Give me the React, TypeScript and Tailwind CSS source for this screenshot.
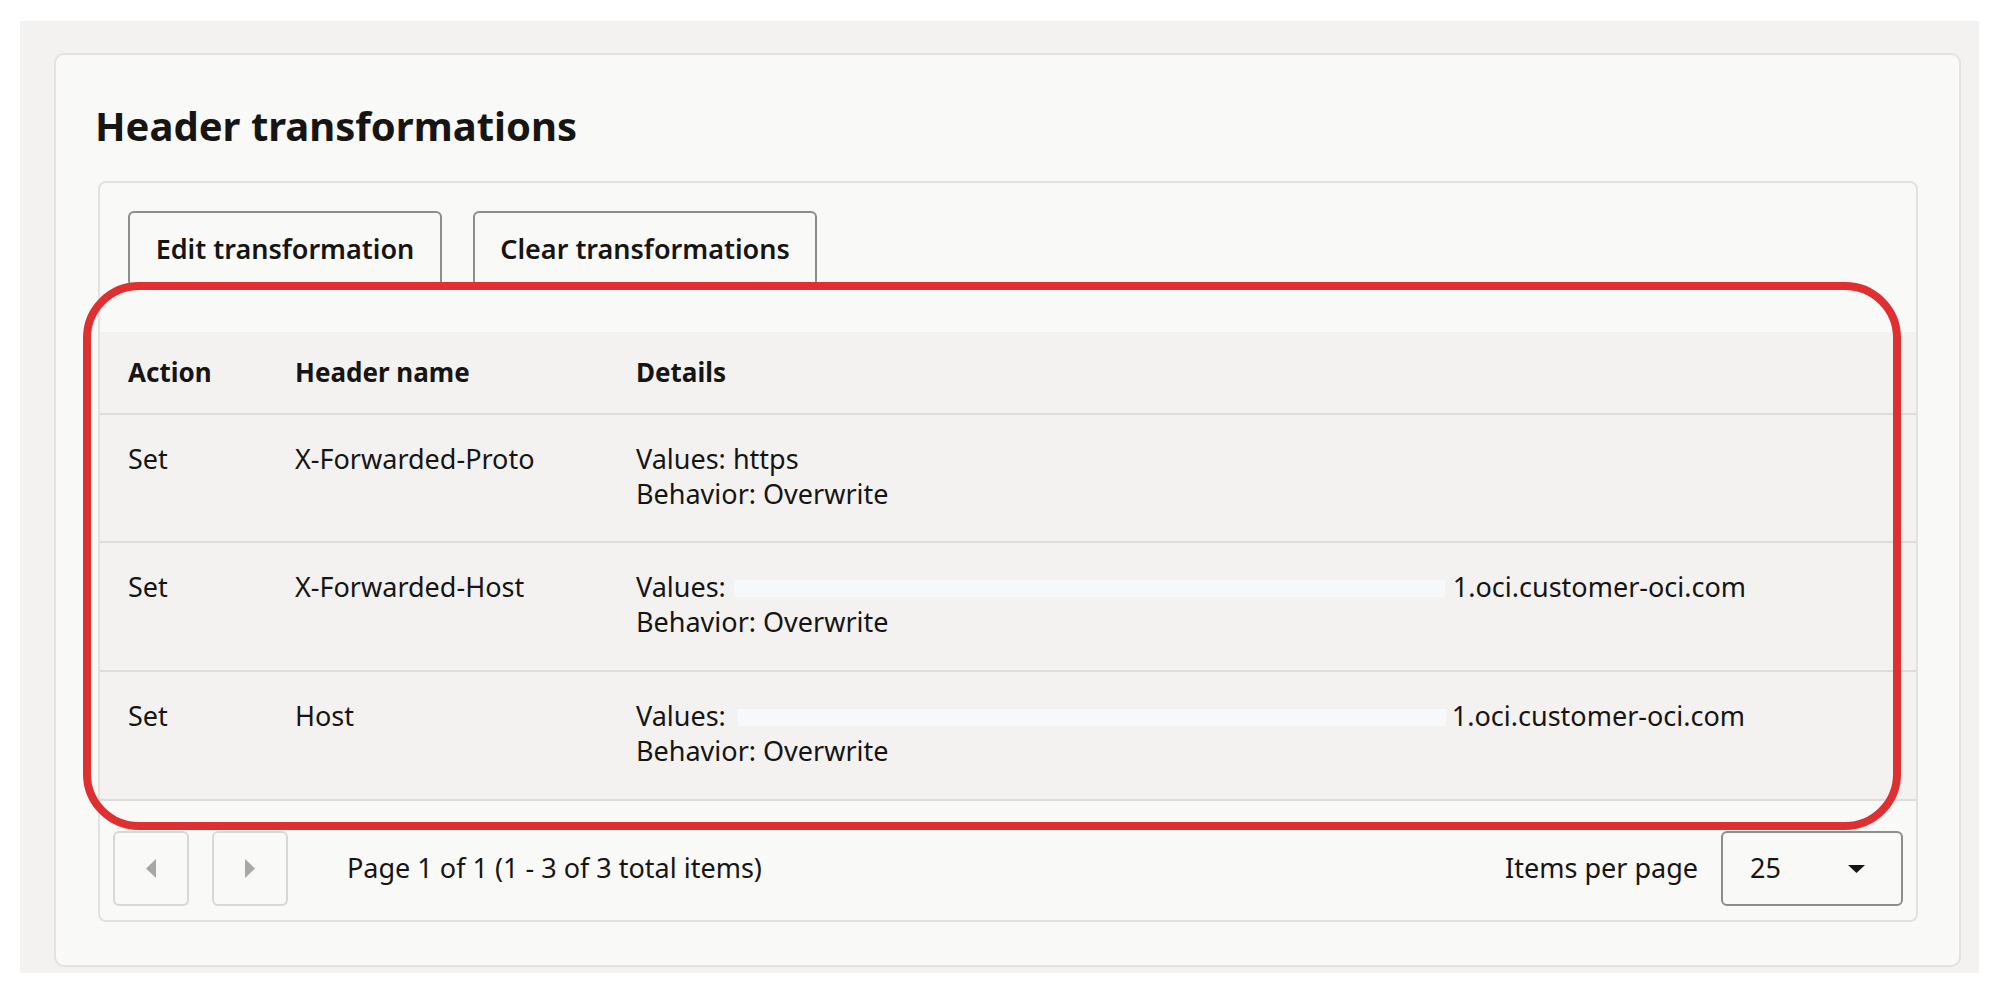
import React from "react";

type Row = {
    action: string;
    header: string;
    value: string;
    // redacted part of the value, drawn as a blank bar
    bar?: { ml: string; w: string; mr: string };
};

const rows: Row[] = [
    { action: "Set", header: "X-Forwarded-Proto", value: "https" },
    {
        action: "Set",
        header: "X-Forwarded-Host",
        value: "1.oci.customer-oci.com",
        bar: { ml: "ml-[8px]", w: "w-[711px]", mr: "mr-[8px]" },
    },
    {
        action: "Set",
        header: "Host",
        value: "1.oci.customer-oci.com",
        bar: { ml: "ml-[12px]", w: "w-[708px]", mr: "mr-[6px]" },
    },
];

function PagerButton({ dir }: { dir: "left" | "right" }) {
    return (
        <button className="flex h-[75px] w-[76px] items-center justify-center rounded-[6px] border-2 border-[#d9d8d6] bg-[#f9f9f8]">
            <svg width="10" height="19" viewBox="0 0 10 19">
                {dir === "left" ? (
                    <polygon points="10,0 10,19 0,9.5" fill="#a9a7a5" />
                ) : (
                    <polygon points="0,0 0,19 10,9.5" fill="#a9a7a5" />
                )}
            </svg>
        </button>
    );
}

export default function App() {
    return (
        <div className="h-[995px] w-[2000px] bg-white pl-[20px] pt-[21px] font-['Noto_Sans',sans-serif] text-[#161513]">
            <div className="h-[952px] w-[1959px] bg-[#f3f2f0] pl-[34px] pt-[32px]">
                <section className="h-[914px] w-[1907px] rounded-[10px] border-2 border-[#e3e2e0] bg-[#f9f9f8] pl-[42px] pr-[41px]">
                    <h1 className="-ml-[3px] pt-[47px] text-[40px] font-bold leading-[48px]">
                        Header transformations
                    </h1>

                    {/* Table panel */}
                    <div className="relative mt-[31px] rounded-[8px] border-2 border-[#e3e2e0]">
                        {/* Toolbar */}
                        <div className="flex gap-[31px] pl-[28px] pt-[28px]">
                            <button className="h-[76px] w-[314px] rounded-[6px] border-2 border-[#8f8d8b] text-[27px] font-semibold">
                                Edit transformation
                            </button>
                            <button className="h-[76px] w-[344px] rounded-[6px] border-2 border-[#8f8d8b] text-[27px] font-semibold">
                                Clear transformations
                            </button>
                        </div>

                        {/* Table */}
                        <div className="mt-[45px] bg-[#f3f2f1] text-[27px]">
                            <div className="grid h-[83px] grid-cols-[167px_341px_1fr] items-center border-b-2 border-[#dddcda] text-[26px] font-bold">
                                <div className="pl-[28px]">Action</div>
                                <div className="pl-[28px]">Header name</div>
                                <div className="pl-[28px]">Details</div>
                            </div>
                            {rows.map((r, i) => (
                                <div
                                    key={r.header}
                                    className={`grid grid-cols-[167px_341px_1fr] border-b-2 border-[#dddcda] pt-[26px] leading-[35px] ${
                                        i === 0 ? "h-[128px]" : "h-[129px]"
                                    }`}
                                >
                                    <div className="pl-[28px]">{r.action}</div>
                                    <div className="pl-[28px]">{r.header}</div>
                                    <div className="pl-[28px]">
                                        <div>
                                            Values:
                                            {r.bar ? (
                                                <span
                                                    className={`inline-block h-[17px] bg-[#f6f8fb] align-baseline ${r.bar.ml} ${r.bar.w} ${r.bar.mr}`}
                                                />
                                            ) : (
                                                " "
                                            )}
                                            {r.value}
                                        </div>
                                        <div>Behavior: Overwrite</div>
                                    </div>
                                </div>
                            ))}
                        </div>

                        {/* Pagination */}
                        <div className="flex items-center px-[13px] pb-[14px] pt-[30px] text-[27px]">
                            <div className="flex gap-[23px]">
                                <PagerButton dir="left" />
                                <PagerButton dir="right" />
                            </div>
                            <span className="ml-[59px]">Page 1 of 1 (1 - 3 of 3 total items)</span>
                            <div className="ml-auto flex items-center gap-[23px]">
                                <span>Items per page</span>
                                <div className="flex h-[75px] w-[182px] items-center justify-between rounded-[6px] border-2 border-[#8f8d8b] pl-[27px] pr-[36px]">
                                    <span>25</span>
                                    <svg width="17" height="8" viewBox="0 0 17 8">
                                        <polygon points="0,0 17,0 8.5,8" fill="#161513" />
                                    </svg>
                                </div>
                            </div>
                        </div>

                        {/* Red highlight annotation drawn over the table */}
                        <div className="pointer-events-none absolute left-[-17px] top-[99px] h-[548px] w-[1818px] rounded-[56px] border-[8px] border-[#df2f30]" />
                    </div>
                </section>
            </div>
        </div>
    );
}
